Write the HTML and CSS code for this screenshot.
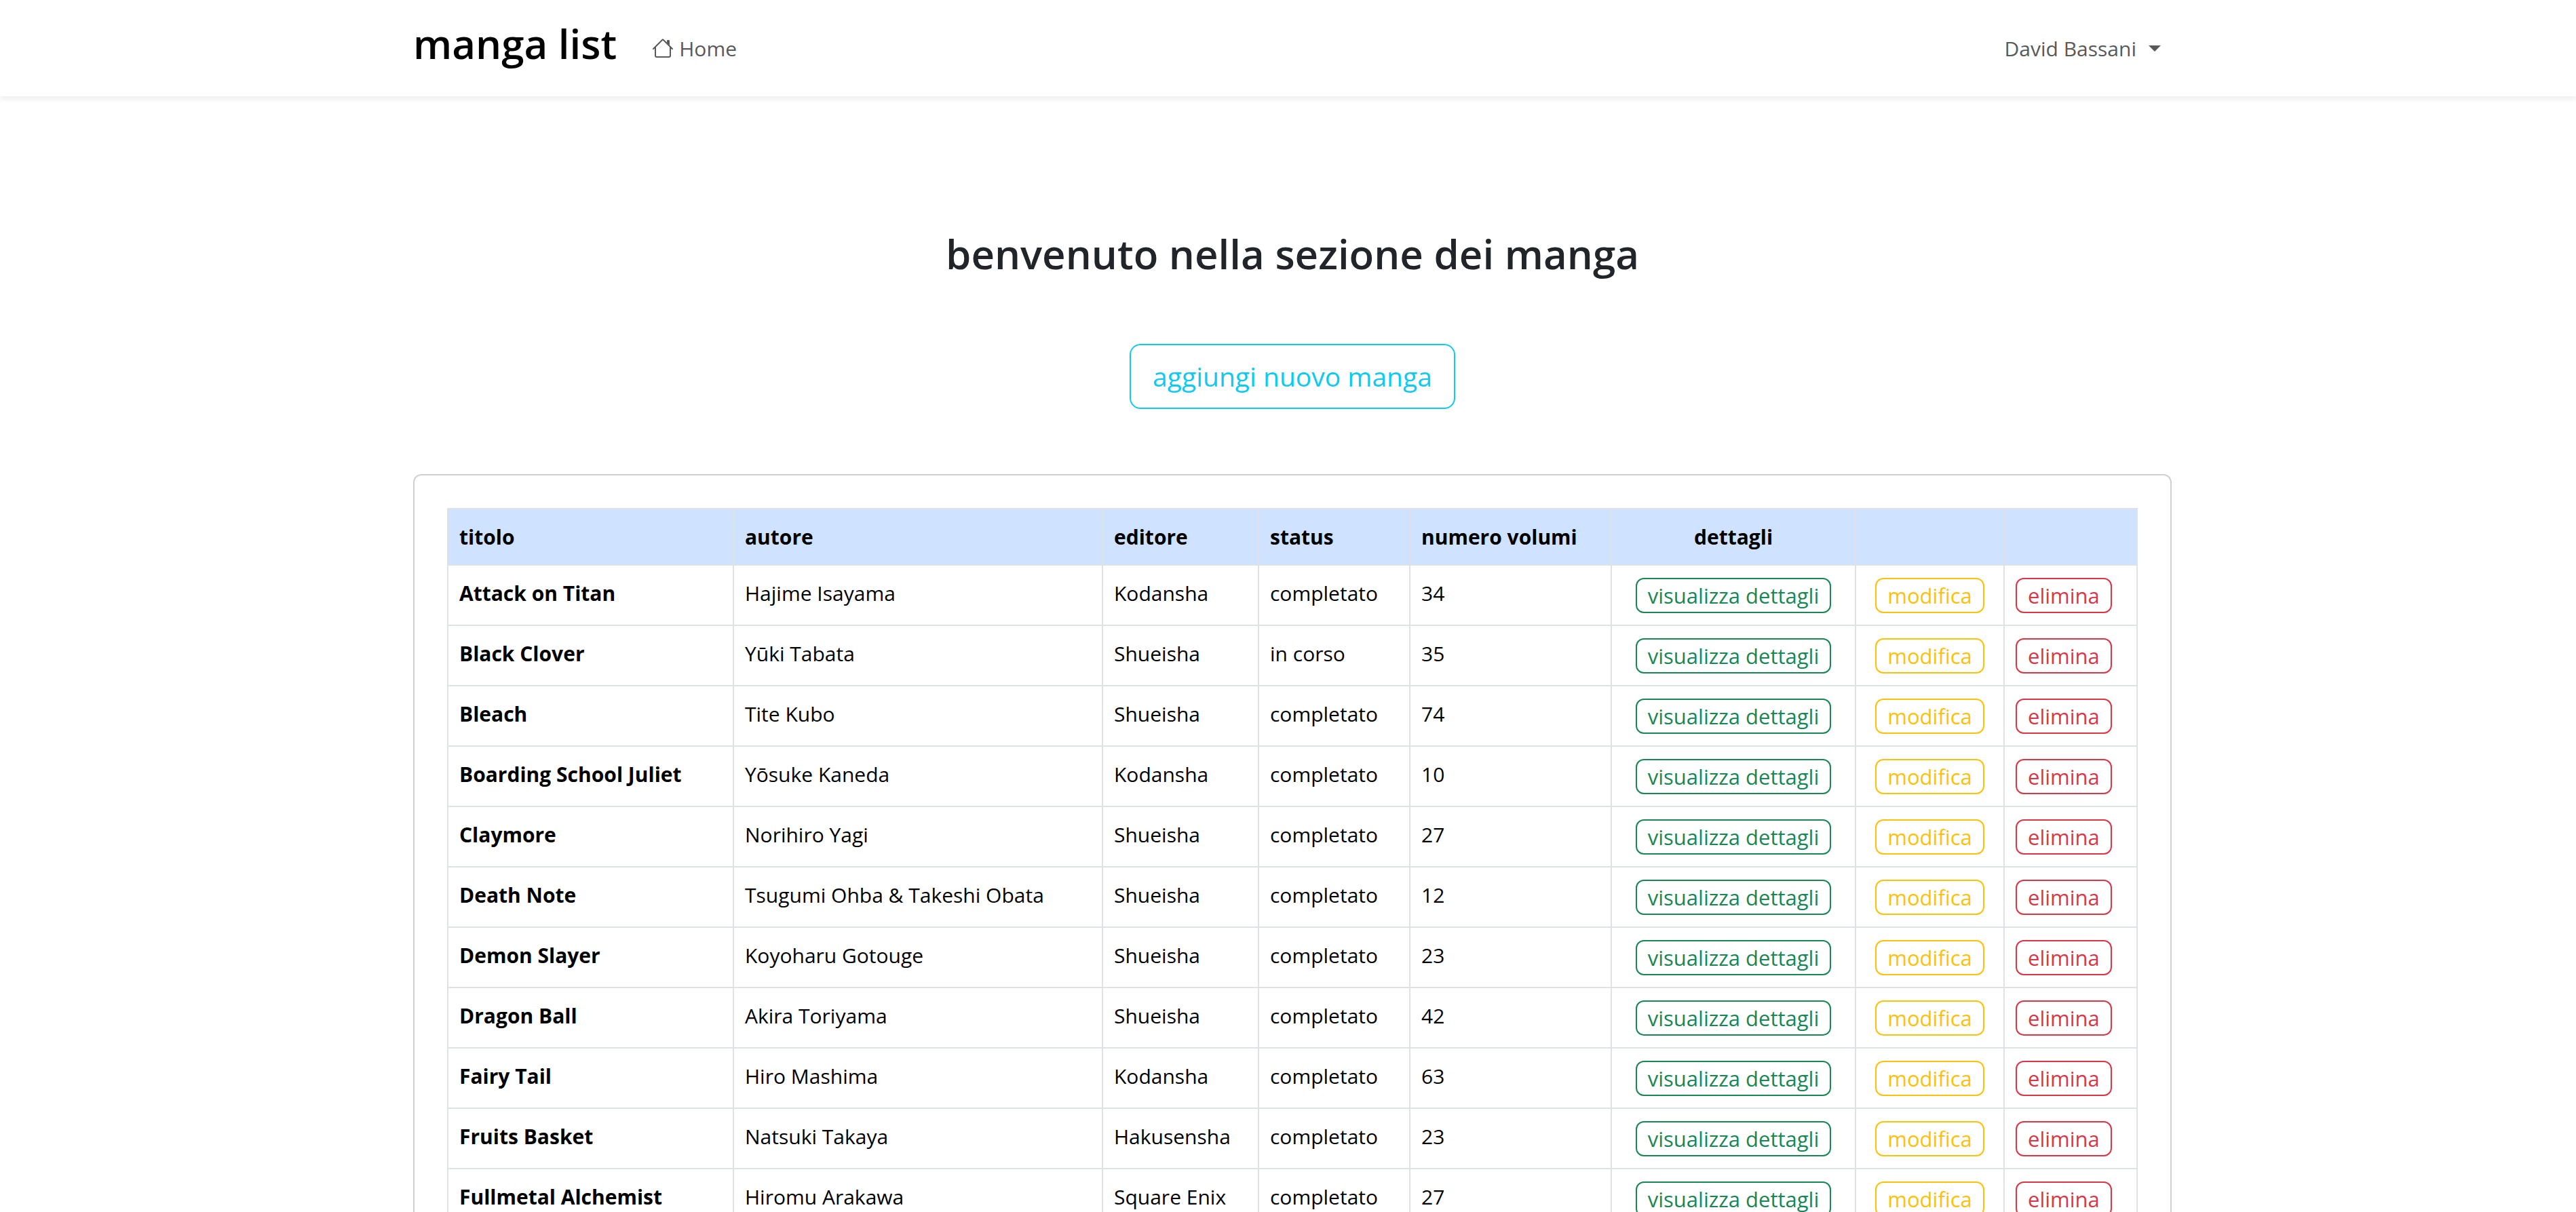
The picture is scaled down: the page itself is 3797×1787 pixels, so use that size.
FILE: index.html
```html
<!DOCTYPE html>
<html lang="it">
<head>
<meta charset="utf-8">
<title>manga list</title>
<meta name="viewport" content="width=device-width, initial-scale=1">
<link rel="stylesheet" href="styles.css">
</head>
<body>
<header class="navbar">
  <nav class="container navbar-inner">
    <a class="brand" href="#">manga list</a>
    <a class="nav-link" href="#">
      <svg class="icon" viewBox="0 0 16 16" fill="currentColor" aria-hidden="true"><path fill-rule="evenodd" d="M2 13.5V7h1v6.5a.5.5 0 0 0 .5.5h9a.5.5 0 0 0 .5-.5V7h1v6.5a1.5 1.5 0 0 1-1.5 1.5h-9A1.5 1.5 0 0 1 2 13.5zm11-11V6l-2-2V2.5a.5.5 0 0 1 .5-.5h1a.5.5 0 0 1 .5.5z"/><path fill-rule="evenodd" d="M7.293 1.5a1 1 0 0 1 1.414 0l6.647 6.646a.5.5 0 0 1-.708.708L8 2.207 1.354 8.854a.5.5 0 1 1-.708-.708L7.293 1.5z"/></svg>
      <span>Home</span>
    </a>
    <button class="nav-link user-menu" type="button">David Bassani<span class="caret"></span></button>
  </nav>
</header>
<main class="page">
  <div class="container">
    <h1 class="title">benvenuto nella sezione dei manga</h1>
    <div class="actions"><button class="btn btn-add" type="button">aggiungi nuovo manga</button></div>
    <section class="card">
      <table class="table">
        <colgroup><col class="c-title"><col class="c-author"><col class="c-publisher"><col class="c-status"><col class="c-volumes"><col class="c-details"><col class="c-edit"><col class="c-delete"></colgroup>
        <thead>
          <tr><th>titolo</th><th>autore</th><th>editore</th><th>status</th><th>numero volumi</th><th class="center">dettagli</th><th></th><th></th></tr>
        </thead>
        <tbody>
          <tr><th>Attack on Titan</th><td>Hajime Isayama</td><td>Kodansha</td><td>completato</td><td>34</td><td class="cell-btn center"><button class="btn btn-view" type="button">visualizza dettagli</button></td><td class="cell-btn center"><button class="btn btn-edit" type="button">modifica</button></td><td class="cell-btn"><button class="btn btn-delete" type="button">elimina</button></td></tr>
          <tr><th>Black Clover</th><td>Yūki Tabata</td><td>Shueisha</td><td>in corso</td><td>35</td><td class="cell-btn center"><button class="btn btn-view" type="button">visualizza dettagli</button></td><td class="cell-btn center"><button class="btn btn-edit" type="button">modifica</button></td><td class="cell-btn"><button class="btn btn-delete" type="button">elimina</button></td></tr>
          <tr><th>Bleach</th><td>Tite Kubo</td><td>Shueisha</td><td>completato</td><td>74</td><td class="cell-btn center"><button class="btn btn-view" type="button">visualizza dettagli</button></td><td class="cell-btn center"><button class="btn btn-edit" type="button">modifica</button></td><td class="cell-btn"><button class="btn btn-delete" type="button">elimina</button></td></tr>
          <tr><th>Boarding School Juliet</th><td>Yōsuke Kaneda</td><td>Kodansha</td><td>completato</td><td>10</td><td class="cell-btn center"><button class="btn btn-view" type="button">visualizza dettagli</button></td><td class="cell-btn center"><button class="btn btn-edit" type="button">modifica</button></td><td class="cell-btn"><button class="btn btn-delete" type="button">elimina</button></td></tr>
          <tr><th>Claymore</th><td>Norihiro Yagi</td><td>Shueisha</td><td>completato</td><td>27</td><td class="cell-btn center"><button class="btn btn-view" type="button">visualizza dettagli</button></td><td class="cell-btn center"><button class="btn btn-edit" type="button">modifica</button></td><td class="cell-btn"><button class="btn btn-delete" type="button">elimina</button></td></tr>
          <tr><th>Death Note</th><td>Tsugumi Ohba &amp; Takeshi Obata</td><td>Shueisha</td><td>completato</td><td>12</td><td class="cell-btn center"><button class="btn btn-view" type="button">visualizza dettagli</button></td><td class="cell-btn center"><button class="btn btn-edit" type="button">modifica</button></td><td class="cell-btn"><button class="btn btn-delete" type="button">elimina</button></td></tr>
          <tr><th>Demon Slayer</th><td>Koyoharu Gotouge</td><td>Shueisha</td><td>completato</td><td>23</td><td class="cell-btn center"><button class="btn btn-view" type="button">visualizza dettagli</button></td><td class="cell-btn center"><button class="btn btn-edit" type="button">modifica</button></td><td class="cell-btn"><button class="btn btn-delete" type="button">elimina</button></td></tr>
          <tr><th>Dragon Ball</th><td>Akira Toriyama</td><td>Shueisha</td><td>completato</td><td>42</td><td class="cell-btn center"><button class="btn btn-view" type="button">visualizza dettagli</button></td><td class="cell-btn center"><button class="btn btn-edit" type="button">modifica</button></td><td class="cell-btn"><button class="btn btn-delete" type="button">elimina</button></td></tr>
          <tr><th>Fairy Tail</th><td>Hiro Mashima</td><td>Kodansha</td><td>completato</td><td>63</td><td class="cell-btn center"><button class="btn btn-view" type="button">visualizza dettagli</button></td><td class="cell-btn center"><button class="btn btn-edit" type="button">modifica</button></td><td class="cell-btn"><button class="btn btn-delete" type="button">elimina</button></td></tr>
          <tr><th>Fruits Basket</th><td>Natsuki Takaya</td><td>Hakusensha</td><td>completato</td><td>23</td><td class="cell-btn center"><button class="btn btn-view" type="button">visualizza dettagli</button></td><td class="cell-btn center"><button class="btn btn-edit" type="button">modifica</button></td><td class="cell-btn"><button class="btn btn-delete" type="button">elimina</button></td></tr>
          <tr><th>Fullmetal Alchemist</th><td>Hiromu Arakawa</td><td>Square Enix</td><td>completato</td><td>27</td><td class="cell-btn center"><button class="btn btn-view" type="button">visualizza dettagli</button></td><td class="cell-btn center"><button class="btn btn-edit" type="button">modifica</button></td><td class="cell-btn"><button class="btn btn-delete" type="button">elimina</button></td></tr>
        </tbody>
      </table>
    </section>
  </div>
</main>
</body>
</html>
```
FILE: styles.css
```css
* { box-sizing: border-box; }

body {
  margin: 0;
  background: #fff;
  color: #212529;
  font-family: "Segoe UI", "Open Sans", "Noto Sans", sans-serif;
  font-size: 30px;
  line-height: 51px;
}

button { font: inherit; cursor: pointer; }

.container {
  width: 100%;
  max-width: 2592px;
  margin: 0 auto;
}

/* top bar */
.navbar {
  padding: 16px 0 16px 13px;
  background: #fff;
  box-shadow: 0 4px 8px rgba(0, 0, 0, .075);
}
.navbar-inner {
  display: flex;
  align-items: center;
  height: 110px;
}
.brand {
  margin: 0 36px 14px 0;
  color: #000;
  font-size: 60px;
  font-weight: 600;
  line-height: 96px;
  text-decoration: none;
}
.nav-link {
  display: flex;
  align-items: center;
  gap: 8px;
  padding: 0 16px;
  border: 0;
  background: none;
  color: #595959;
  text-decoration: none;
}
.icon { width: 32px; height: 32px; }
.user-menu { margin-left: auto; gap: 18px; }
.caret {
  border-top: 9px solid;
  border-left: 9px solid transparent;
  border-right: 9px solid transparent;
}

/* page content */
.page { padding: 192px 0 48px 13px; }
.title {
  margin: 0 0 92px;
  font-size: 60px;
  font-weight: 600;
  line-height: 81px;
  text-align: center;
}
.actions {
  display: flex;
  justify-content: center;
  margin-bottom: 96px;
}

/* buttons */
.btn {
  display: inline-block;
  padding: 0 16px;
  border: 2px solid currentColor;
  border-radius: 12px;
  background: transparent;
  font-size: 31px;
  line-height: 48px;
  white-space: nowrap;
  vertical-align: top;
}
.btn-add {
  padding: 16px 32px;
  border-radius: 16px;
  color: #0dcaf0;
  font-size: 39px;
  line-height: 60px;
}
.btn-view { color: #198754; }
.btn-edit { color: #ffc107; }
.btn-delete { color: #dc3545; }

/* list */
.card {
  padding: 48px;
  border: 2px solid #d0d0d0;
  border-radius: 12px;
}
.table {
  width: 100%;
  border-collapse: collapse;
  table-layout: fixed;
  color: #000;
}
.table th,
.table td {
  padding: 15px 16px;
  border: 2px solid #dee2e6;
  text-align: left;
  vertical-align: top;
  white-space: nowrap;
}
.table tbody td,
.table tbody th { height: 89px; }
.table thead th { background: #cfe2ff; }
.table .cell-btn { padding-top: 18px; }
.table .center { text-align: center; }

.c-title { width: 421px; }
.c-author { width: 544px; }
.c-publisher { width: 230px; }
.c-status { width: 223px; }
.c-volumes { width: 297px; }
.c-details { width: 360px; }
.c-edit { width: 219px; }
.c-delete { width: 196px; }
```
